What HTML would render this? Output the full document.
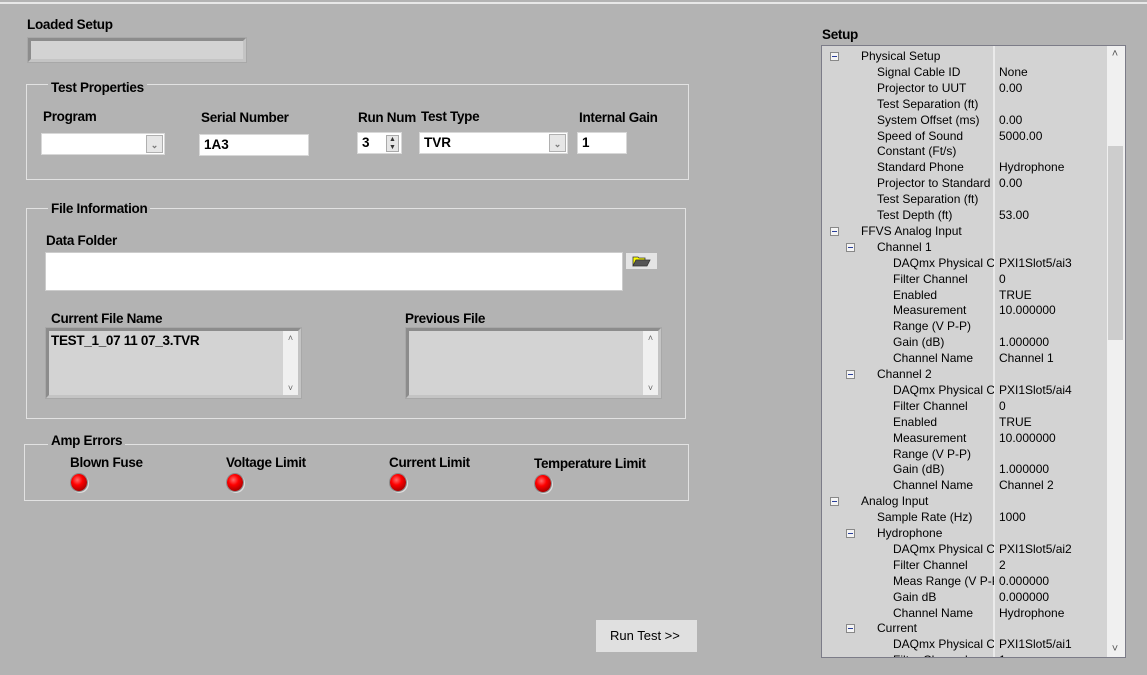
<!DOCTYPE html>
<html><head><meta charset="utf-8"><style>
*{margin:0;padding:0;box-sizing:border-box}
body{width:1147px;height:675px;background:#b3b3b3;position:relative;overflow:hidden;font-family:"Liberation Sans",sans-serif;color:#000}
.a{position:absolute}
.lb{position:absolute;font-weight:bold;font-size:13.5px;letter-spacing:-0.3px;line-height:15px;white-space:nowrap}
.grp{position:absolute;border:1px solid #e2e2e2}
.gt{position:absolute;background:#b3b3b3;padding:0 3px;font-weight:bold;font-size:13.5px;letter-spacing:-0.3px;line-height:15px;white-space:nowrap}
.inp{position:absolute;background:#fff;border:1px solid #d8d8d8;font-weight:bold;font-size:13.5px;line-height:19px;padding-left:4px}
.dd{position:absolute;width:17px;top:1px;bottom:1px;right:1px;background:#e6e6e6;border:1px solid #b0b0b0;color:#777;font-size:9px;text-align:center;line-height:18px}
.sunk{position:absolute;background:#d3d3d3;border:3px solid;border-color:#8c8c8c #c4c4c4 #c4c4c4 #8c8c8c;outline:1px solid #a8a8a8}
.sb{position:absolute;top:0;bottom:0;right:0;width:16px;background:#f0f0f0;color:#666;font-size:9px;text-align:center}
.led{position:absolute;width:16px;height:17px;border-radius:50%;background:radial-gradient(circle at 40% 35%,#ff6a6a 0,#f00 35%,#a00 75%);box-shadow:0 0 0 1px #8a8a8a,1px 1px 0 1px #ddd}
.tree{position:absolute;left:821px;top:45px;width:305px;height:613px;background:#d3d3d3;border:1px solid #7c7c88;overflow:hidden;font-size:12px}
.r{position:absolute;height:16px;line-height:16px;white-space:nowrap;left:0;width:280px}
.r .t{position:absolute}
.r .v{position:absolute;left:177px}
.bx{position:absolute;top:4px;width:9px;height:9px;border:1px solid #888;background:#f4f4f4}
.bx:after{content:"";position:absolute;left:1px;top:3px;width:5px;height:1px;background:#2a3f9a}
</style></head><body>
<div class="a" style="left:0;top:2px;width:1147px;height:2px;background:#e8e8e8"></div>

<div class="lb" style="left:27px;top:17px">Loaded Setup</div>
<div class="sunk" style="left:28px;top:38px;width:218px;height:24px"></div>

<div class="grp" style="left:26px;top:84px;width:663px;height:96px"></div>
<div class="gt" style="left:48px;top:80px">Test Properties</div>
<div class="lb" style="left:43px;top:109px">Program</div>
<div class="inp" style="left:41px;top:133px;width:124px;height:22px"><div class="dd">&#8964;</div></div>
<div class="lb" style="left:201px;top:110px">Serial Number</div>
<div class="inp" style="left:199px;top:134px;width:110px;height:22px">1A3</div>
<div class="lb" style="left:358px;top:110px">Run Num</div>
<div class="inp" style="left:357px;top:132px;width:45px;height:22px">3<div style="position:absolute;right:2px;top:2px;width:13px;height:17px;background:#e6e6e6;border:1px solid #aaa;font-size:7px;line-height:8px;text-align:center;color:#333">▲<br>▼</div></div>
<div class="lb" style="left:421px;top:109px">Test Type</div>
<div class="inp" style="left:419px;top:132px;width:149px;height:22px">TVR<div class="dd">&#8964;</div></div>
<div class="lb" style="left:579px;top:110px">Internal Gain</div>
<div class="inp" style="left:577px;top:132px;width:50px;height:22px">1</div>

<div class="grp" style="left:26px;top:208px;width:660px;height:211px"></div>
<div class="gt" style="left:48px;top:201px">File Information</div>
<div class="lb" style="left:46px;top:233px">Data Folder</div>
<div class="inp" style="left:45px;top:252px;width:578px;height:39px;border-color:#ccc"></div>
<div class="a" style="left:626px;top:253px;width:31px;height:16px;background:#e4e4e4">
<svg width="31" height="16" viewBox="0 0 31 16"><path d="M7 4h5l1 1h6v2H10l-3 6z" fill="#ffff00" stroke="#333" stroke-width="0.8"/><path d="M7 13l3-6h14l-3 6z" fill="#555" stroke="#333" stroke-width="0.8"/></svg></div>
<div class="lb" style="left:51px;top:311px">Current File Name</div>
<div class="sunk" style="left:46px;top:328px;width:255px;height:70px"><div style="font-weight:bold;font-size:13.5px;letter-spacing:-0.3px;padding:2px 0 0 2px">TEST_1_07 11 07_3.TVR</div><div class="sb" style="width:15px"><div style="position:absolute;top:2px;width:100%">&#708;</div><div style="position:absolute;bottom:2px;width:100%">&#709;</div></div></div>
<div class="lb" style="left:405px;top:311px">Previous File</div>
<div class="sunk" style="left:406px;top:328px;width:255px;height:70px"><div class="sb" style="width:15px"><div style="position:absolute;top:2px;width:100%">&#708;</div><div style="position:absolute;bottom:2px;width:100%">&#709;</div></div></div>

<div class="grp" style="left:24px;top:444px;width:665px;height:57px"></div>
<div class="gt" style="left:48px;top:433px">Amp Errors</div>
<div class="lb" style="left:70px;top:455px">Blown Fuse</div>
<div class="lb" style="left:226px;top:455px">Voltage Limit</div>
<div class="lb" style="left:389px;top:455px">Current Limit</div>
<div class="lb" style="left:534px;top:456px">Temperature Limit</div>
<div class="led" style="left:71px;top:474px"></div>
<div class="led" style="left:227px;top:474px"></div>
<div class="led" style="left:390px;top:474px"></div>
<div class="led" style="left:535px;top:475px"></div>

<div class="a" style="left:596px;top:620px;width:101px;height:32px;background:#e0e0e0;font-size:13px;line-height:32px;padding-left:14px">Run Test &gt;&gt;</div>

<div class="lb" style="left:822px;top:27px">Setup</div>
<div class="tree">
<div class="a" style="left:171px;top:0;width:2px;height:100%;background:#eaeaea"></div>
<div id="rows"></div>
<div class="a" style="left:285px;top:0;width:18px;height:100%;background:#f0f0f0">
<div class="a" style="left:1px;top:100px;width:15px;height:194px;background:#cdcdcd"></div>
<div class="a" style="left:0;top:2px;width:16px;text-align:center;font-size:11px;color:#555">&#708;</div>
<div class="a" style="left:0;bottom:2px;width:16px;text-align:center;font-size:11px;color:#555">&#709;</div>
</div>
</div>
<script>
var d=[["Physical Setup",0,"",1],["Signal Cable ID",1,"None"],["Projector to UUT",1,"0.00"],["Test Separation (ft)",1,""],["System Offset (ms)",1,"0.00"],["Speed of Sound",1,"5000.00"],["Constant (Ft/s)",1,""],["Standard Phone",1,"Hydrophone"],["Projector to Standard",1,"0.00"],["Test Separation (ft)",1,""],["Test Depth (ft)",1,"53.00"],
["FFVS Analog Input",0,"",1],["Channel 1",1,"",1],["DAQmx Physical C",2,"PXI1Slot5/ai3"],["Filter Channel",2,"0"],["Enabled",2,"TRUE"],["Measurement",2,"10.000000"],["Range (V P-P)",2,""],["Gain (dB)",2,"1.000000"],["Channel Name",2,"Channel 1"],
["Channel 2",1,"",1],["DAQmx Physical C",2,"PXI1Slot5/ai4"],["Filter Channel",2,"0"],["Enabled",2,"TRUE"],["Measurement",2,"10.000000"],["Range (V P-P)",2,""],["Gain (dB)",2,"1.000000"],["Channel Name",2,"Channel 2"],
["Analog Input",0,"",1],["Sample Rate (Hz)",1,"1000"],["Hydrophone",1,"",1],["DAQmx Physical C",2,"PXI1Slot5/ai2"],["Filter Channel",2,"2"],["Meas Range (V P-P",2,"0.000000"],["Gain dB",2,"0.000000"],["Channel Name",2,"Hydrophone"],["Current",1,"",1],["DAQmx Physical C",2,"PXI1Slot5/ai1"],["Filter Channel",2,"1"]];
var h="";d.forEach(function(r,i){var y=2+i*15.9;h+='<div class="r" style="top:'+y+'px">'+(r[3]?'<div class="bx" style="left:'+(8+r[1]*16)+'px"></div>':'')+'<span class="t" style="left:'+(39+r[1]*16)+'px;width:'+(133-r[1]*16)+'px;overflow:hidden">'+r[0]+'</span><span class="v">'+r[2]+'</span></div>';});
document.getElementById("rows").innerHTML=h;
</script>
</body></html>
